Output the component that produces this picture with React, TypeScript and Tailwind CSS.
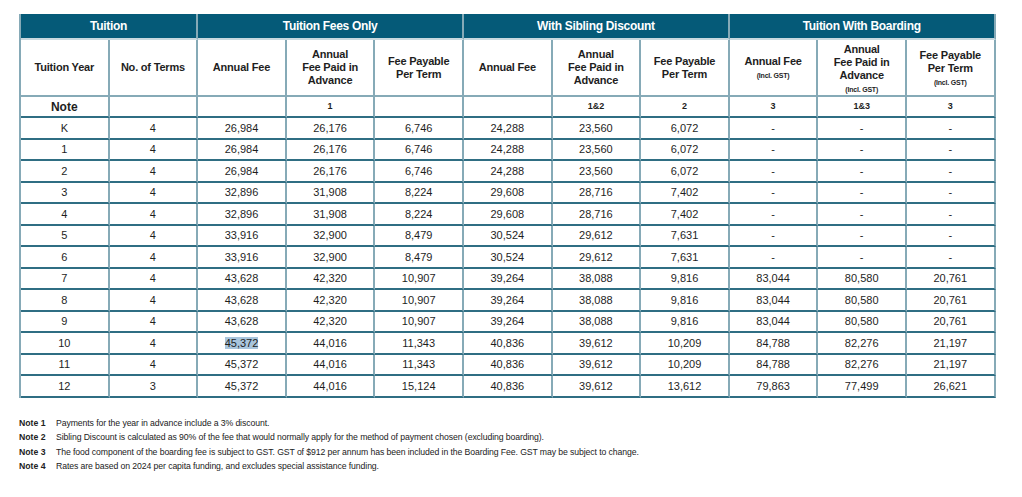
import React from "react";

const rows: string[][] = [
  ["K", "4", "26,984", "26,176", "6,746", "24,288", "23,560", "6,072", "-", "-", "-"],
  ["1", "4", "26,984", "26,176", "6,746", "24,288", "23,560", "6,072", "-", "-", "-"],
  ["2", "4", "26,984", "26,176", "6,746", "24,288", "23,560", "6,072", "-", "-", "-"],
  ["3", "4", "32,896", "31,908", "8,224", "29,608", "28,716", "7,402", "-", "-", "-"],
  ["4", "4", "32,896", "31,908", "8,224", "29,608", "28,716", "7,402", "-", "-", "-"],
  ["5", "4", "33,916", "32,900", "8,479", "30,524", "29,612", "7,631", "-", "-", "-"],
  ["6", "4", "33,916", "32,900", "8,479", "30,524", "29,612", "7,631", "-", "-", "-"],
  ["7", "4", "43,628", "42,320", "10,907", "39,264", "38,088", "9,816", "83,044", "80,580", "20,761"],
  ["8", "4", "43,628", "42,320", "10,907", "39,264", "38,088", "9,816", "83,044", "80,580", "20,761"],
  ["9", "4", "43,628", "42,320", "10,907", "39,264", "38,088", "9,816", "83,044", "80,580", "20,761"],
  ["10", "4", "45,372", "44,016", "11,343", "40,836", "39,612", "10,209", "84,788", "82,276", "21,197"],
  ["11", "4", "45,372", "44,016", "11,343", "40,836", "39,612", "10,209", "84,788", "82,276", "21,197"],
  ["12", "3", "45,372", "44,016", "15,124", "40,836", "39,612", "13,612", "79,863", "77,499", "26,621"],
];

const noteRow = ["", "", "", "1", "", "", "1&2", "2", "3", "1&3", "3"];

const cell = "border-r-2 border-b-2 border-r-[#86aab7] border-b-[#2f6e83] text-center align-middle p-0";

function Sub() {
  return <div className="text-[7px] leading-[9px] font-bold mt-[3px]">(Incl. GST)</div>;
}

const notes = [
  ["Note 1", "Payments for the year in advance include a 3% discount."],
  ["Note 2", "Sibling Discount is calculated as 90% of the fee that would normally apply for the method of payment chosen (excluding boarding)."],
  ["Note 3", "The food component of the boarding fee is subject to GST.  GST of $912 per annum has been included in the Boarding Fee. GST may be subject to change."],
  ["Note 4", "Rates are based on 2024 per capita funding, and excludes special assistance funding."],
];

export default function App() {
  return (
    <div className="w-[1022px] h-[497px] bg-white pt-[14px] pl-[19px]" style={{ fontFamily: '"Liberation Sans", Arial, sans-serif' }}>
      <table className="table-fixed w-[975px] border-separate border-spacing-0 border-l-2 border-l-[#86aab7] text-[#1e1e1e]">
        <colgroup>
          {Array.from({ length: 11 }).map((_, i) => (
            <col key={i} className="w-[88.6px]" />
          ))}
        </colgroup>
        <thead>
          <tr className="h-[26px] bg-[#055a78] text-white text-[12px] font-bold">
            <th colSpan={2} className="border-r-2 border-r-[#86aab7] border-b-2 border-b-[#c9d8de] p-0 tracking-[-0.3px]">Tuition</th>
            <th colSpan={3} className="border-r-2 border-r-[#86aab7] border-b-2 border-b-[#c9d8de] p-0 tracking-[-0.3px]">Tuition Fees Only</th>
            <th colSpan={3} className="border-r-2 border-r-[#86aab7] border-b-2 border-b-[#c9d8de] p-0 tracking-[-0.3px]">With Sibling Discount</th>
            <th colSpan={3} className="border-r-2 border-r-[#86aab7] border-b-2 border-b-[#c9d8de] p-0 tracking-[-0.3px]">Tuition With Boarding</th>
          </tr>
          <tr className="h-[57px] text-[11px] font-bold leading-[13px] tracking-[-0.2px]">
            <th className={cell + " border-b-[#86aab7]"}>Tuition Year</th>
            <th className={cell + " border-b-[#86aab7]"}>No. of Terms</th>
            <th className={cell + " border-b-[#86aab7]"}>Annual Fee</th>
            <th className={cell + " border-b-[#86aab7]"}>Annual<br />Fee Paid in<br />Advance</th>
            <th className={cell + " border-b-[#86aab7]"}>Fee Payable<br />Per Term</th>
            <th className={cell + " border-b-[#86aab7]"}>Annual Fee</th>
            <th className={cell + " border-b-[#86aab7]"}>Annual<br />Fee Paid in<br />Advance</th>
            <th className={cell + " border-b-[#86aab7]"}>Fee Payable<br />Per Term</th>
            <th className={cell + " border-b-[#86aab7]"}>Annual Fee<Sub /></th>
            <th className={cell + " border-b-[#86aab7]"}><div className="mt-[1px]">Annual<br />Fee Paid in<br />Advance</div><Sub /></th>
            <th className={cell + " border-b-[#86aab7]"}>Fee Payable<br />Per Term<Sub /></th>
          </tr>
        </thead>
        <tbody>
          <tr className="h-[21px]">
            <td className={cell + " text-[12px] font-bold"}>Note</td>
            {noteRow.slice(1).map((v, i) => (
              <td key={i} className={cell + " text-[9px] font-bold"}>{v}</td>
            ))}
          </tr>
          {rows.map((r, ri) => (
            <tr key={ri} className="h-[21.5px] text-[11px]">
              {r.map((v, ci) => (
                <td key={ci} className={cell}>
                  {ri === 10 && ci === 2 ? <span className="bg-[#a9c5dc]">{v}</span> : v}
                </td>
              ))}
            </tr>
          ))}
        </tbody>
      </table>
      <div className="mt-[20px] flex flex-col gap-[4px] text-[8.7px] leading-[10.5px] text-[#222]">
        {notes.map(([k, t]) => (
          <div key={k} className="flex">
            <span className="w-[37px] font-bold">{k}</span>
            <span className="tracking-[-0.1px]">{t}</span>
          </div>
        ))}
      </div>
    </div>
  );
}
